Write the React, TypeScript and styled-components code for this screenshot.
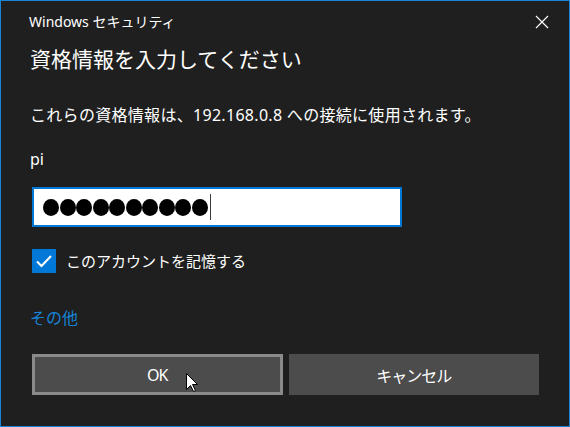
import styled, { createGlobalStyle } from "styled-components";

const GlobalStyle = createGlobalStyle`
  html, body {
    margin: 0;
    padding: 0;
    background: #1f1f1f;
  }
  body {
    font-family: "Noto Sans", "Noto Sans CJK JP", sans-serif;
  }
`;

const Window = styled.div`
  position: relative;
  box-sizing: border-box;
  width: 570px;
  height: 427px;
  border: 1px solid #1883d7;
  background-color: #1f1f1f;
  color: #ffffff;
  overflow: hidden;
`;

const TitleBar = styled.div`
  display: flex;
  justify-content: space-between;
  align-items: center;
  height: 41px;
  padding: 0 20px 0 28px;
`;

const Title = styled.span`
  font-size: 14px;
  line-height: 20px;
`;

const CloseButton = styled.div`
  display: flex;
  width: 14px;
  height: 14px;
`;

const Content = styled.div`
  display: flex;
  flex-direction: column;
  align-items: flex-start;
  padding: 0 30px 0 29px;
`;

const Heading = styled.h1`
  margin: 2px 0 0;
  font-size: 21px;
  font-weight: 400;
  line-height: 30px;
`;

const Text = styled.p<{ $top: number; $spacing?: number }>`
  margin: ${(p) => p.$top}px 0 0;
  font-size: 16px;
  line-height: 22px;
  letter-spacing: ${(p) => p.$spacing ?? 0}px;
`;

const Field = styled.div`
  display: flex;
  align-items: center;
  box-sizing: border-box;
  width: 370px;
  height: 40px;
  margin: 17px 0 0 2px;
  padding-left: 9px;
  border: 2px solid #0078d7;
  background: #ffffff;
`;

const Dots = styled.div`
  display: flex;
  gap: 0.5px;
`;

const Dot = styled.span`
  width: 16px;
  height: 17px;
  border-radius: 50%;
  background: #000000;
`;

const Caret = styled.span`
  width: 1px;
  height: 26px;
  margin-left: 2px;
  background: #3c3c3c;
`;

const CheckRow = styled.label`
  display: flex;
  align-items: center;
  gap: 10px;
  margin: 22px 0 0 2px;
  font-size: 15px;
  line-height: 22px;
`;

const CheckBox = styled.span`
  display: flex;
  align-items: center;
  justify-content: center;
  width: 24px;
  height: 24px;
  background: #0078d7;
`;

const MoreLink = styled.a`
  margin-top: 34px;
  color: #1684d8;
  font-size: 16px;
  line-height: 22px;
  text-decoration: none;
`;

const ButtonRow = styled.div`
  display: grid;
  grid-template-columns: 1fr 1fr;
  gap: 6px;
  align-self: stretch;
  margin: 25px 0 0 2px;
`;

const Button = styled.button<{ $focused?: boolean }>`
  box-sizing: border-box;
  height: 41px;
  border: 3px solid ${(p) => (p.$focused ? "#8a8a8a" : "#4c4c4c")};
  background: #4c4c4c;
  color: #ffffff;
  font-family: "Noto Sans", "Noto Sans CJK JP", sans-serif;
  font-size: 16px;
  letter-spacing: -1px;
`;

const Pointer = styled.svg`
  position: absolute;
  left: 185px;
  top: 372px;
`;

export default function App() {
  return (
    <>
      <GlobalStyle />
      <Window>
        <TitleBar>
          <Title>Windows セキュリティ</Title>
          <CloseButton>
            <svg width="14" height="14" viewBox="0 0 14 14">
              <path d="M1 1 L13 13 M13 1 L1 13" stroke="#ffffff" strokeWidth="1.2" />
            </svg>
          </CloseButton>
        </TitleBar>
        <Content>
          <Heading>資格情報を入力してください</Heading>
          <Text $top={30} $spacing={0.3}>
            これらの資格情報は、192.168.0.8 への接続に使用されます。
          </Text>
          <Text $top={22}>pi</Text>
          <Field>
            <Dots>
              {Array.from({ length: 10 }).map((_, i) => (
                <Dot key={i} />
              ))}
            </Dots>
            <Caret />
          </Field>
          <CheckRow>
            <CheckBox>
              <svg width="18" height="18" viewBox="0 0 18 18">
                <path d="M2 9.5 L6.5 14 L16 4" fill="none" stroke="#ffffff" strokeWidth="2" />
              </svg>
            </CheckBox>
            このアカウントを記憶する
          </CheckRow>
          <MoreLink>その他</MoreLink>
          <ButtonRow>
            <Button $focused>OK</Button>
            <Button>キャンセル</Button>
          </ButtonRow>
        </Content>
        <Pointer width="13" height="20" viewBox="0 0 13 20">
          <path
            d="M0.5 0.5 L0.5 16.5 L4.5 12.5 L7.5 18.5 L9.5 17.5 L6.5 11.5 L11.5 11.5 Z"
            fill="#ffffff"
            stroke="#000000"
            strokeWidth="1"
          />
        </Pointer>
      </Window>
    </>
  );
}
